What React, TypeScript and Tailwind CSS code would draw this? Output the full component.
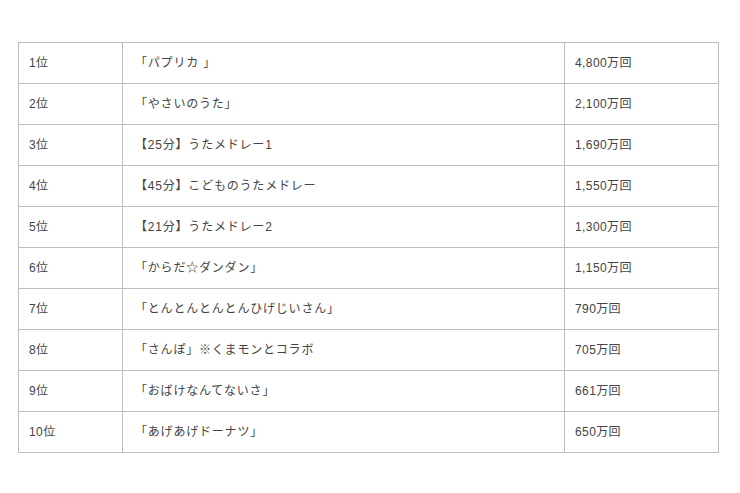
const rows = [
  { rank: "1位", title: "「パプリカ 」", views: "4,800万回" },
  { rank: "2位", title: "「やさいのうた」", views: "2,100万回" },
  { rank: "3位", title: "【25分】うたメドレー1", views: "1,690万回" },
  { rank: "4位", title: "【45分】こどものうたメドレー", views: "1,550万回" },
  { rank: "5位", title: "【21分】うたメドレー2", views: "1,300万回" },
  { rank: "6位", title: "「からだ☆ダンダン」", views: "1,150万回" },
  { rank: "7位", title: "「とんとんとんとんひげじいさん」", views: "790万回" },
  { rank: "8位", title: "「さんぽ」※くまモンとコラボ", views: "705万回" },
  { rank: "9位", title: "「おばけなんてないさ」", views: "661万回" },
  { rank: "10位", title: "「あげあげドーナツ」", views: "650万回" },
];

export default function App() {
  return (
    <div className="w-[740px] h-[493px] bg-white pt-[42px] pl-[18px] font-['Liberation_Sans','Noto_Sans_CJK_JP',sans-serif] text-[12px] tracking-[0.4px] text-[#444]">
      <table className="w-[700px] border-collapse table-fixed">
        <colgroup>
          <col className="w-[104px]" />
          <col className="w-[442px]" />
          <col className="w-[154px]" />
        </colgroup>
        <tbody>
          {rows.map((r) => (
            <tr key={r.rank} className="h-[41px]">
              <td className="border border-[#bdbdbd] px-[10px] py-0">{r.rank}</td>
              <td className="border border-[#bdbdbd] pl-[12px] py-0 tracking-[0.8px]">{r.title}</td>
              <td className="border border-[#bdbdbd] px-[10px] py-0">{r.views}</td>
            </tr>
          ))}
        </tbody>
      </table>
    </div>
  );
}
